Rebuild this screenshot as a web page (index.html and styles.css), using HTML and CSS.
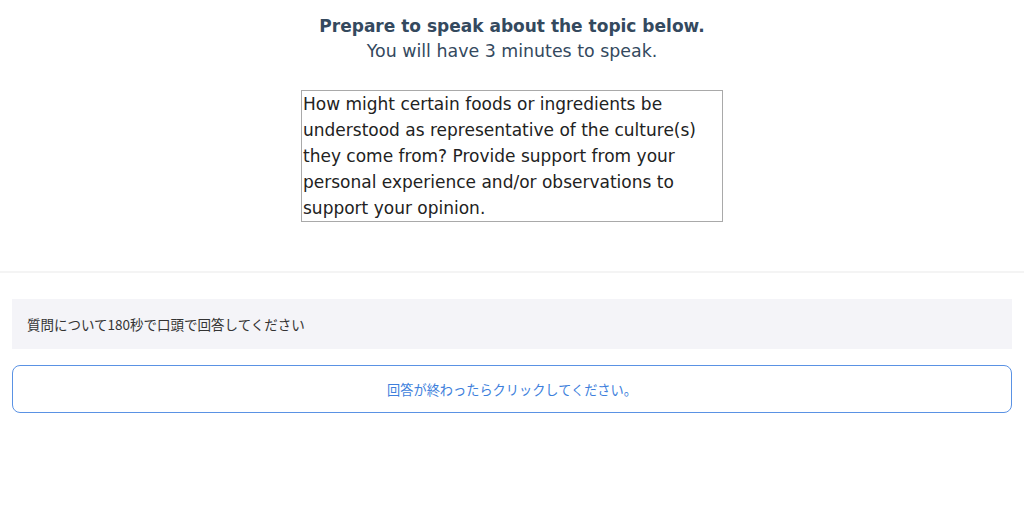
FILE: index.html
```html
<!DOCTYPE html>
<html lang="ja">
<head>
<meta charset="utf-8">
<link rel="stylesheet" href="styles.css">
</head>
<body>
<section class="prompt">
  <div class="title">Prepare to speak about the topic below.</div>
  <div class="subtitle">You will have 3 minutes to speak.</div>
  <div class="topic">How might certain foods or ingredients be understood as representative of the culture(s) they come from? Provide support from your personal experience and/or observations to support your opinion.</div>
</section>
<hr class="divider">
<section class="answer">
  <div class="notice">質問について180秒で口頭で回答してください</div>
  <button class="done">回答が終わったらクリックしてください。</button>
</section>
</body>
</html>
```
FILE: styles.css
```css
html, body {
  margin: 0;
  padding: 0;
  background: #fff;
}
.prompt {
  padding-top: 14px;
  display: flex;
  flex-direction: column;
  align-items: center;
  font-family: "DejaVu Sans", Verdana, sans-serif;
}
.title {
  font-weight: bold;
  font-size: 17px;
  line-height: 24px;
  color: #34495e;
}
.subtitle {
  font-size: 17.4px;
  line-height: 26px;
  color: #34495e;
}
.topic {
  margin-top: 26px;
  width: 418px;
  border: 1px solid #a9a9a9;
  padding: 0 1px;
  font-size: 17px;
  line-height: 26px;
  color: #222;
}
.divider {
  margin: 49px 0 0;
  border: none;
  height: 2px;
  background: #f4f4f4;
}
.answer {
  padding: 26px 12px 0;
  display: flex;
  flex-direction: column;
  gap: 16px;
  font-family: "Noto Sans CJK JP", sans-serif;
}
.notice {
  height: 50px;
  display: flex;
  align-items: center;
  padding-left: 15px;
  background: #f4f4f8;
  color: #333;
  font-size: 13.5px;
}
.done {
  height: 48px;
  border: 1px solid #5a92e4;
  border-radius: 8px;
  background: #fff;
  color: #3e7fdc;
  font-family: "Noto Sans CJK JP", sans-serif;
  font-size: 13.2px;
  padding: 0;
}
```
